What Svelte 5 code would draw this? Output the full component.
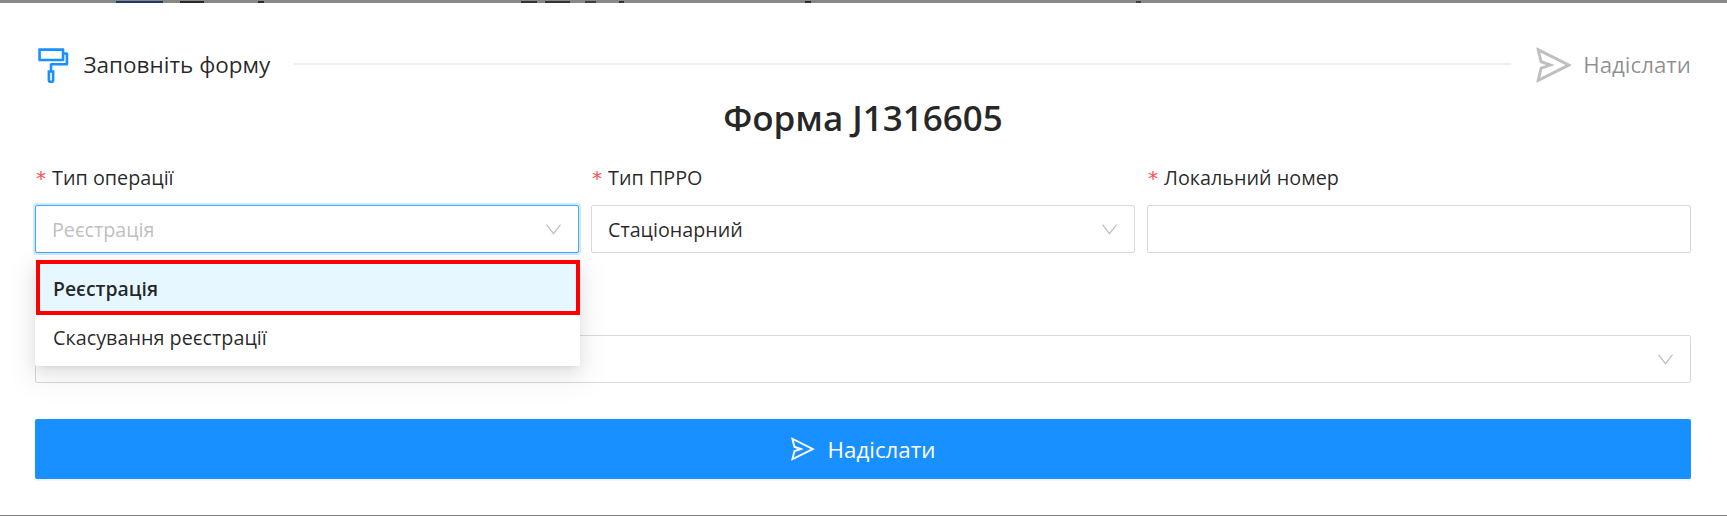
<script lang="ts">
  let fields = [
    { label: "Тип операції", value: "Реєстрація", kind: "select", open: true },
    { label: "Тип ПРРО", value: "Стаціонарний", kind: "select", open: false },
    { label: "Локальний номер", value: "", kind: "input", open: false },
  ];
  let options = ["Реєстрація", "Скасування реєстрації"];

  // what peeks out from the page behind the modal
  let behind = [
    { gap: 116, width: 47, color: "#1d3a63" },
    { gap: 17, width: 24, color: "#2a2a2a" },
    { gap: 54, width: 6, color: "#2b2b2b" },
    { gap: 257, width: 16, color: "#333" },
    { gap: 8, width: 25, color: "#333" },
    { gap: 15, width: 11, color: "#3a3f45" },
    { gap: 23, width: 5, color: "#2b3340" },
    { gap: 181, width: 6, color: "#2b2b2b" },
    { gap: 325, width: 5, color: "#3a3f45" },
  ];

  const sendPath =
    "M931.4 498.9L94.9 79.5c-3.4-1.7-7.3-2.1-11-1.2a15.99 15.99 0 00-11.7 19.3l86.2 352.2c1.3 5.3 5.2 9.6 10.4 11.3l147.7 50.7-147.6 50.7c-5.2 1.8-9.1 6-10.3 11.3L72.2 926.5c-.9 3.7-.5 7.6 1.2 10.9 3.9 7.9 13.5 11.1 21.5 7.2l836.5-417c3.1-1.5 5.6-4.1 7.2-7.1 3.9-8 .7-17.6-7.2-21.6zM170.8 826.3l50.3-205.6 295.2-101.3c2.3-.8 4.2-2.6 5-5 1.4-4.2-.8-8.7-5-10.2L221.1 403 171 198.2l628 314.9-628.2 313.2z";
</script>

{#snippet chevron()}
  <svg class="chevron" viewBox="0 0 15 11" width="15" height="11" fill="none">
    <path d="M.5.7l7 9 7-9" stroke="#bfbfbf" stroke-width="1.2" />
  </svg>
{/snippet}

{#snippet plane(cls: string)}
  <svg class={cls} viewBox="64 64 896 896" fill="currentColor">
    <path d={sendPath} />
  </svg>
{/snippet}

<div class="page">
  <div class="behind">
    {#each behind as b}
      <i style="margin-left: {b.gap}px; width: {b.width}px; background: {b.color}"></i>
    {/each}
  </div>
  <div class="modal">
    <div class="steps">
      <svg class="roller" viewBox="64 64 896 896" fill="#1890ff">
        <path
          fill-rule="evenodd"
          d="M840 192h-56v-72c0-13.3-10.7-24-24-24H168c-13.3 0-24 10.7-24 24v272c0 13.3 10.7 24 24 24h592c13.3 0 24-10.7 24-24V256h32v200H465c-22.1 0-40 17.9-40 40v136h-44c-4.4 0-8 3.6-8 8v228c0 .6.1 1.3.2 1.9-.1 2-.2 4.1-.2 6.1 0 46.4 37.6 84 84 84s84-37.6 84-84c0-2.1-.1-4.1-.2-6.1.1-.6.2-1.2.2-1.9V640c0-4.4-3.6-8-8-8h-44V520h351c22.1 0 40-17.9 40-40V232c0-22.1-17.9-40-40-40zM720 352H208V160h512v192zM477 876c0 11-9 20-20 20s-20-9-20-20V696h40v180z"
        />
      </svg>
      <span class="step-title">Заповніть форму</span>
      <div class="step-line"></div>
      {@render plane("step-plane")}
      <span class="step-next">Надіслати</span>
    </div>

    <h1>Форма J1316605</h1>

    <div class="row">
      {#each fields as f}
        <div class="field">
          <div class="label"><span class="star">*</span>{f.label}</div>
          <div class="control" class:focused={f.open}>
            <span class:placeholder={f.open}>{f.value}</span>
            {#if f.kind === "select"}{@render chevron()}{/if}
          </div>
          {#if f.open}
            <div class="dropdown">
              {#each options as opt, i}
                <div class="option" class:active={i === 0}>{opt}</div>
              {/each}
            </div>
          {/if}
        </div>
      {/each}
    </div>

    <div class="wide">
      <div class="control">
        <span></span>
        {@render chevron()}
      </div>
    </div>

    <button class="submit">
      {@render plane("btn-plane")}
      <span>Надіслати</span>
    </button>
  </div>
</div>

<style>
  :global(body) {
    margin: 0;
    background: #7c7c7c;
  }

  .page {
    height: 516px;
    padding-bottom: 1px;
    box-sizing: border-box;
    font-family: "Open Sans", "Noto Sans", sans-serif;
    color: rgba(0, 0, 0, 0.85);
    display: flex;
    flex-direction: column;
  }

  .behind {
    display: flex;
    align-items: flex-end;
    height: 3px;
    background: #878787;
    flex: none;
  }

  .behind i {
    display: block;
    height: 2px;
    flex: none;
  }

  .modal {
    flex: 1;
    background: #fff;
    padding: 0 36px 0 35px;
    min-height: 0;
  }

  .steps {
    display: flex;
    align-items: center;
    height: 36px;
    padding-top: 44px;
  }

  .roller {
    width: 36.5px;
    height: 36.5px;
    flex: none;
  }

  .step-title {
    margin-left: 12px;
    padding-bottom: 2px;
    font-size: 22.5px;
    white-space: nowrap;
  }

  .step-line {
    flex: 1;
    height: 2px;
    background: #f0f0f0;
    margin: 0 25px 3px 24px;
  }

  .step-plane {
    width: 36px;
    height: 36px;
    color: #bfbfbf;
    flex: none;
  }

  .step-next {
    margin-left: 11px;
    padding-bottom: 2px;
    font-size: 22.3px;
    color: rgba(0, 0, 0, 0.45);
  }

  h1 {
    margin: 0;
    padding-top: 13px;
    height: 44px;
    line-height: 44px;
    text-align: center;
    font-size: 35px;
    font-weight: 600;
  }

  .row {
    display: grid;
    grid-template-columns: repeat(3, 1fr);
    gap: 12px;
    margin-top: 23px;
  }

  .field {
    position: relative;
  }

  .label {
    height: 30px;
    line-height: 30px;
    font-size: 19.8px;
    margin-bottom: 12px;
  }

  .star {
    font-family: "DejaVu Sans", sans-serif;
    color: #ff4d4f;
    margin: 0 6px 0 1px;
    font-size: 20px;
  }

  .control {
    display: flex;
    align-items: center;
    justify-content: space-between;
    height: 48px;
    box-sizing: border-box;
    border: 1px solid #d9d9d9;
    border-radius: 2px;
    padding: 0 17px 0 16px;
    font-size: 19.7px;
    background: #fff;
  }

  .control.focused {
    border-color: #40a9ff;
    box-shadow: 0 0 0 2px rgba(24, 144, 255, 0.2);
  }

  .placeholder {
    color: #bfbfbf;
  }

  .dropdown {
    position: absolute;
    left: 0;
    right: -1px;
    top: 97px;
    background: #fff;
    border-radius: 2px;
    box-shadow:
      0 3px 6px -4px rgba(0, 0, 0, 0.12),
      0 6px 16px 0 rgba(0, 0, 0, 0.08),
      0 9px 28px 8px rgba(0, 0, 0, 0.05);
    z-index: 2;
  }

  .option {
    height: 51px;
    line-height: 46px;
    padding: 0 18px;
    font-size: 19.8px;
    box-sizing: border-box;
  }

  .option.active {
    height: 55px;
    line-height: 50px;
    margin-left: 1px;
    background: #e6f7ff;
    font-size: 19.4px;
    font-weight: 600;
    border: 4px solid #f00;
    padding: 0 13px;
  }

  .wide {
    margin-top: 82px;
  }

  .submit {
    display: flex;
    align-items: center;
    justify-content: center;
    gap: 13px;
    width: 100%;
    height: 60px;
    margin-top: 36px;
    padding: 0;
    border: none;
    border-radius: 2px;
    background: #1890ff;
    color: #fff;
    font-family: inherit;
    font-size: 22.3px;
    box-shadow: 0 2px 0 rgba(0, 0, 0, 0.045);
  }

  .btn-plane {
    width: 24px;
    height: 24px;
  }
</style>
